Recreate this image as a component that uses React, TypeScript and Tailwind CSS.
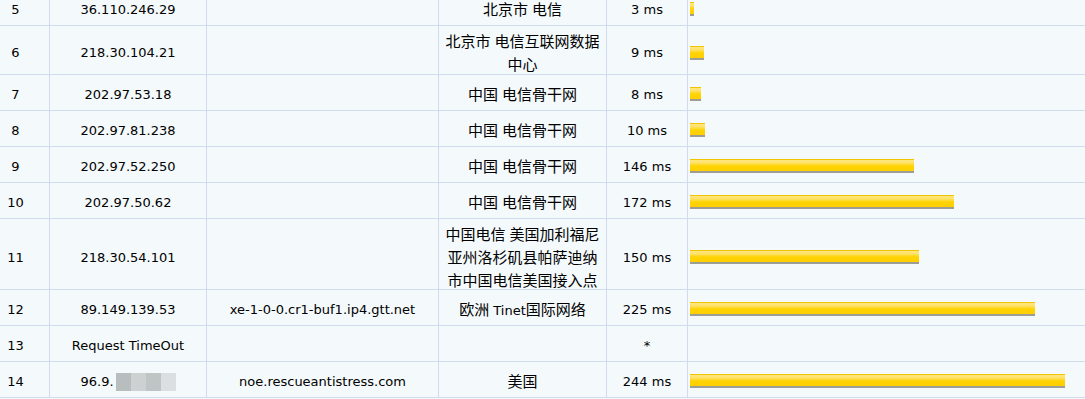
import React from "react";

type Hop = {
  n: number;
  ip: string;
  host?: string;
  loc?: string;
  ms: string;
  bar: number;
  rowH: string;
  blurred?: boolean;
};

const HOPS: Hop[] = [
  { n: 5, ip: "36.110.246.29", loc: "北京市 电信", ms: "3 ms", bar: 4, rowH: "h-[36px]" },
  { n: 6, ip: "218.30.104.21", loc: "北京市 电信互联网数据中心", ms: "9 ms", bar: 14, rowH: "h-[49px]" },
  { n: 7, ip: "202.97.53.18", loc: "中国 电信骨干网", ms: "8 ms", bar: 11, rowH: "h-[36px]" },
  { n: 8, ip: "202.97.81.238", loc: "中国 电信骨干网", ms: "10 ms", bar: 15, rowH: "h-[36px]" },
  { n: 9, ip: "202.97.52.250", loc: "中国 电信骨干网", ms: "146 ms", bar: 224, rowH: "h-[36px]" },
  { n: 10, ip: "202.97.50.62", loc: "中国 电信骨干网", ms: "172 ms", bar: 264, rowH: "h-[36px]" },
  {
    n: 11,
    ip: "218.30.54.101",
    loc: "中国电信 美国加利福尼亚州洛杉矶县帕萨迪纳市中国电信美国接入点",
    ms: "150 ms",
    bar: 229,
    rowH: "h-[71px]",
  },
  {
    n: 12,
    ip: "89.149.139.53",
    host: "xe-1-0-0.cr1-buf1.ip4.gtt.net",
    loc: "欧洲 Tinet国际网络",
    ms: "225 ms",
    bar: 345,
    rowH: "h-[36px]",
  },
  { n: 13, ip: "Request TimeOut", ms: "*", bar: 0, rowH: "h-[36px]" },
  {
    n: 14,
    ip: "96.9.",
    host: "noe.rescueantistress.com",
    loc: "美国",
    ms: "244 ms",
    bar: 375,
    rowH: "h-[36px]",
    blurred: true,
  },
];

// CJK glyphs render a bit larger than the latin text in the original
function Mixed({ text }: { text: string }) {
  const parts = text.split(/([\u3000-\u9fff\uff00-\uffef]+)/);
  return (
    <>
      {parts.map((p, i) =>
        /[\u3000-\u9fff]/.test(p) ? (
          <span key={i} className="text-[15px] font-['Noto_Sans_CJK_SC',sans-serif]">
            {p}
          </span>
        ) : (
          <span key={i}>{p}</span>
        )
      )}
    </>
  );
}

function Bar({ width }: { width: number }) {
  if (!width) return null;
  return (
    <div
      className="h-[14px] border-t border-[#f2c400] border-b-2 border-b-[#9d9d95] bg-[linear-gradient(to_bottom,#ffe680_0%,#ffe36a_25%,#ffd300_55%,#ffcf00_100%)]"
      style={{ width }}
    />
  );
}

export default function App() {
  return (
    <div className="w-[1085px] h-[399px] overflow-hidden bg-[#f4f9fb] text-[13px] text-black font-['DejaVu_Sans','Noto_Sans_CJK_SC',sans-serif]">
      <div className="-mt-[10px]">
        {HOPS.map((h) => (
          <div
            key={h.n}
            className={`grid grid-cols-[50px_157px_232px_168px_81px_1fr] border-b border-[#d0dcee] ${h.rowH}`}
          >
            <div className="flex items-center justify-center pr-[18px] pt-[4px] border-r border-[#d0dcee]">
              {h.n}
            </div>
            <div className="flex items-center justify-center pt-[4px] border-r border-[#d0dcee]">
              {h.ip}
              {h.blurred && (
                <span className="flex ml-[2px] h-[18px] blur-[0.6px]">
                  <span className="w-[15px] bg-[#b8bdbe]" />
                  <span className="w-[15px] bg-[#cdd1d2]" />
                  <span className="w-[15px] bg-[#bfc4c5]" />
                  <span className="w-[15px] bg-[#dcdfe1]" />
                </span>
              )}
            </div>
            <div className="flex items-center justify-center pt-[4px] border-r border-[#d0dcee]">
              {h.host}
            </div>
            <div className="flex items-center justify-center px-[4px] pt-[4px] text-center leading-[21px] border-r border-[#d0dcee]">
              <div>{h.loc && <Mixed text={h.loc} />}</div>
            </div>
            <div className="flex items-center justify-center pt-[4px] border-r border-[#d0dcee]">
              {h.ms}
            </div>
            <div className="flex items-center pl-[2px] pt-[3px]">
              <Bar width={h.bar} />
            </div>
          </div>
        ))}
      </div>
    </div>
  );
}
